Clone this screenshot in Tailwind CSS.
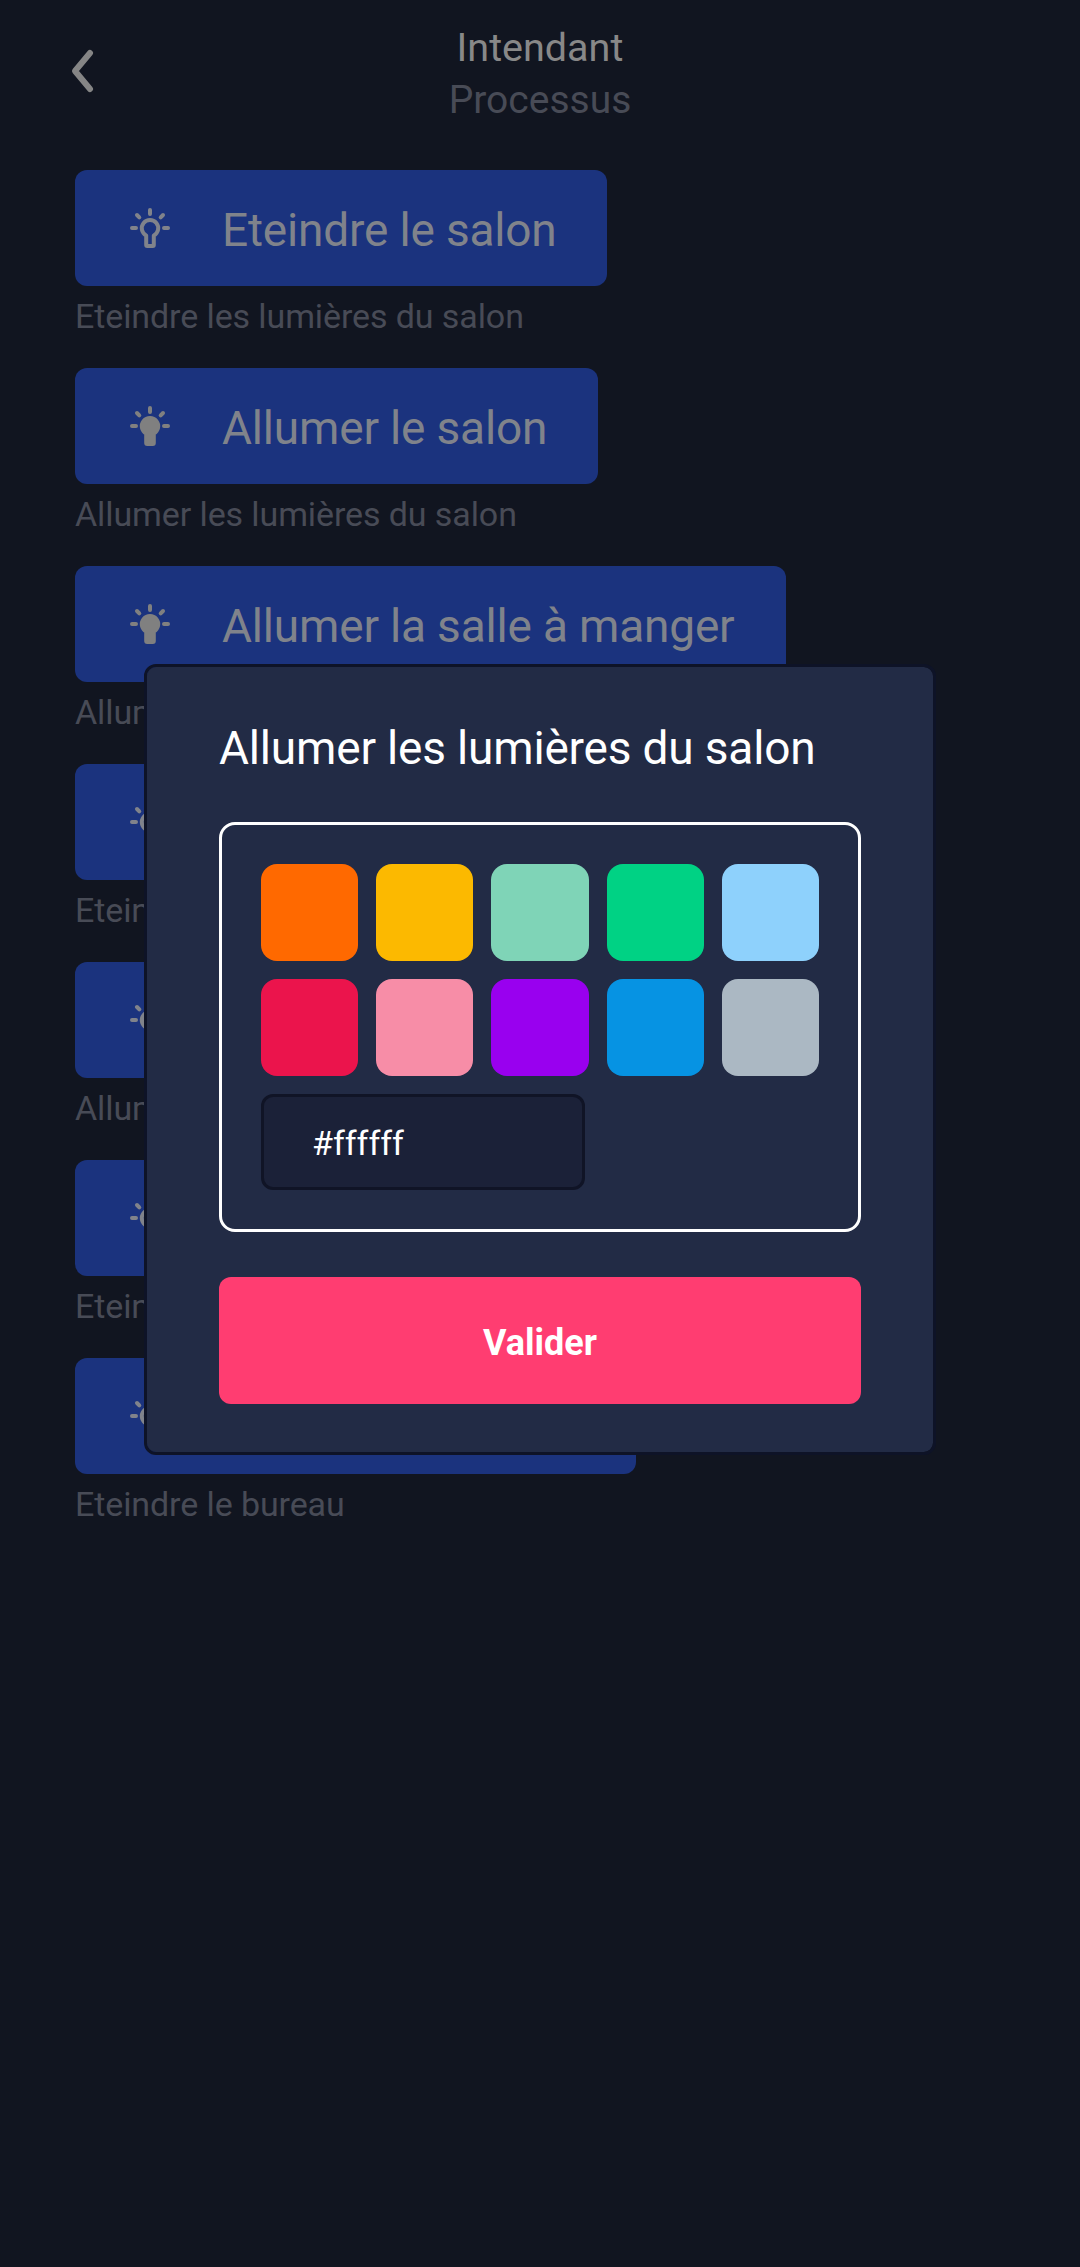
<!DOCTYPE html>
<html lang="fr">
<head>
<meta charset="utf-8">
<title>Intendant</title>
<script src="https://cdn.jsdelivr.net/npm/@tailwindcss/browser@4"></script>
</head>
<body class="bg-[#111520] font-[Roboto,sans-serif] text-[#808080]">
<svg class="hidden">
  <defs>
    <g id="rays" stroke="currentColor" stroke-width="4" stroke-linecap="round">
      <path d="M20 2v4M2 20h4M34 20h4M7 7l2.3 2.3M33 7l-2.3 2.3"/>
    </g>
    <path id="bulb" d="M16.2 27.4A8.2 8.2 0 1 1 23.8 27.4V37a1 1 0 0 1-1 1h-5.600a1 1 0 0 1-1-1z" stroke="currentColor" stroke-width="4" stroke-linejoin="round"/>
    <symbol id="off" viewBox="0 0 40 40"><use href="#rays"/><use href="#bulb" fill="none"/></symbol>
    <symbol id="on" viewBox="0 0 40 40"><use href="#rays"/><use href="#bulb" fill="currentColor"/></symbol>
  </defs>
</svg>
<div class="relative h-[2267px] w-[1080px] overflow-hidden">
  <header class="grid h-[170px] grid-cols-[1fr_auto_1fr] items-start">
    <svg class="mt-[48px] ml-[70px] h-[46px] w-[26px] text-[#858585]" viewBox="0 0 26 46" fill="none" stroke="currentColor" stroke-width="6" stroke-linecap="round" stroke-linejoin="round"><path d="M20 5L5 23l15 18"/></svg>
    <div class="pt-[21px] text-center text-[39px] leading-[53px]">
      <h1 class="text-[39.5px] text-[#888888]">Intendant</h1>
      <p class="text-[#484b56]">Processus</p>
    </div>
  </header>
  <main class="flex flex-col items-start gap-[25px] pl-[75px] text-[34px] leading-[54px] tracking-[-0.1px] text-[#484b56]">
    <section>
      <button class="flex h-[116px] w-[532px] items-center rounded-xl bg-[#1b337e] pl-[55px] text-[46px] tracking-[-0.18px] text-[#80838b]"><svg class="mr-[52px] size-10"><use href="#off"/></svg><span class="pt-[3px]">Eteindre le salon</span></button>
      <p class="pt-[3px]">Eteindre les lumières du salon</p>
    </section>
    <section>
      <button class="flex h-[116px] w-[523px] items-center rounded-xl bg-[#1b337e] pl-[55px] text-[46px] tracking-[-0.18px] text-[#80838b]"><svg class="mr-[52px] size-10 text-[#808080]"><use href="#on"/></svg><span class="pt-[3px]">Allumer le salon</span></button>
      <p class="pt-[3px]">Allumer les lumières du salon</p>
    </section>
    <section>
      <button class="flex h-[116px] w-[711px] items-center rounded-xl bg-[#1b337e] pl-[55px] text-[46px] tracking-[-0.18px] text-[#80838b]"><svg class="mr-[52px] size-10 text-[#808080]"><use href="#on"/></svg><span class="pt-[3px]">Allumer la salle à manger</span></button>
      <p class="pt-[3px]">Allumer la salle à manger</p>
    </section>
    <section>
      <button class="flex h-[116px] w-[711px] items-center rounded-xl bg-[#1b337e] pl-[55px] text-[46px] tracking-[-0.18px] text-[#80838b]"><svg class="mr-[52px] size-10"><use href="#off"/></svg><span class="pt-[3px]">Eteindre la salle à manger</span></button>
      <p class="pt-[3px]">Eteindre la salle à manger</p>
    </section>
    <section>
      <button class="flex h-[116px] w-[560px] items-center rounded-xl bg-[#1b337e] pl-[55px] text-[46px] tracking-[-0.18px] text-[#80838b]"><svg class="mr-[52px] size-10"><use href="#on"/></svg><span class="pt-[3px]">Allumer le bureau</span></button>
      <p class="pt-[3px]">Allumer le bureau</p>
    </section>
    <section>
      <button class="flex h-[116px] w-[560px] items-center rounded-xl bg-[#1b337e] pl-[55px] text-[46px] tracking-[-0.18px] text-[#80838b]"><svg class="mr-[52px] size-10"><use href="#off"/></svg><span class="pt-[3px]">Eteindre tout</span></button>
      <p class="pt-[3px]">Eteindre tout</p>
    </section>
    <section>
      <button class="flex h-[116px] w-[561px] items-center rounded-xl bg-[#1b337e] pl-[55px] text-[46px] tracking-[-0.18px] text-[#80838b]"><svg class="mr-[52px] size-10"><use href="#off"/></svg><span class="pt-[3px]">Eteindre le bureau</span></button>
      <p class="pt-[3px]">Eteindre le bureau</p>
    </section>
  </main>

  <div role="dialog" class="absolute top-[664px] left-[144px] flex h-[791px] w-[792px] flex-col rounded-xl border-3 border-[#0e1327] bg-[#222b45] bg-clip-padding px-[72px] text-white">
    <h2 class="pt-[51px] text-[46px] leading-[60px] tracking-[-0.18px] whitespace-nowrap">Allumer les lumières du salon</h2>
    <div class="mt-11 h-[410px] rounded-2xl border-3 border-white p-[39px]">
      <div class="grid grid-cols-[97px_97px_98px_97px_97px] grid-rows-[97px_97px] gap-[18px]">
        <div class="rounded-2xl bg-[#ff6900]"></div>
        <div class="rounded-2xl bg-[#fcb900]"></div>
        <div class="rounded-2xl bg-[#7fd4b7]"></div>
        <div class="rounded-2xl bg-[#00d284]"></div>
        <div class="rounded-2xl bg-[#8ed1fc]"></div>
        <div class="rounded-2xl bg-[#eb144c]"></div>
        <div class="rounded-2xl bg-[#f78da7]"></div>
        <div class="rounded-2xl bg-[#9900ef]"></div>
        <div class="rounded-2xl bg-[#0693e3]"></div>
        <div class="rounded-2xl bg-[#abb8c3]"></div>
      </div>
      <div class="mt-[18px] flex h-24 w-[324px] items-center rounded-xl border-3 border-[#101426] bg-[#1b2138] pt-0.5 pl-[48px] text-[34px]">#ffffff</div>
    </div>
    <button class="mt-[45px] h-[127px] rounded-xl bg-[#ff3d71] pt-1 text-[36px] font-bold">Valider</button>
  </div>
</div>
</body>
</html>
